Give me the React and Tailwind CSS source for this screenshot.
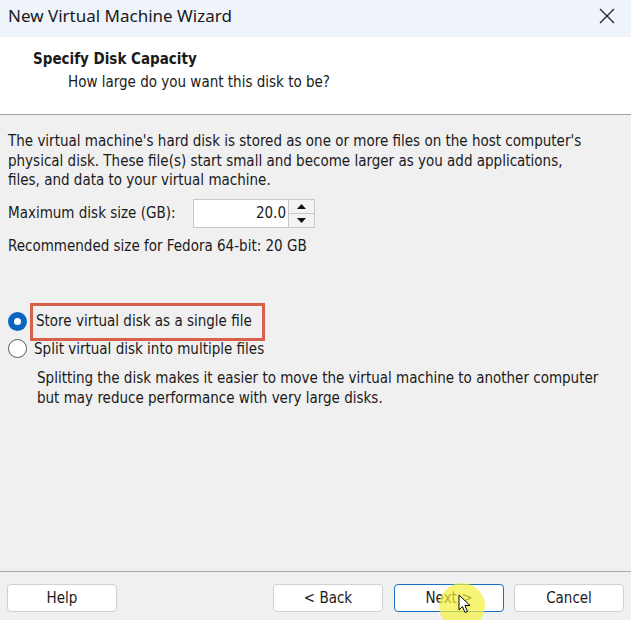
import React from 'react';

const font = "font-['DejaVu_Sans_Condensed','DejaVu_Sans',sans-serif]";

const Radio = ({ checked }) =>
  checked ? (
    <span className="w-[19px] h-[19px] rounded-full bg-[#0a64c0] flex items-center justify-center shrink-0">
      <span className="w-[7px] h-[7px] rounded-full bg-white" />
    </span>
  ) : (
    <span className="w-[19px] h-[19px] rounded-full border border-[#5a5a5a] bg-white shrink-0" />
  );

const Button = ({ children, focused, className = '' }) => (
  <div
    className={`h-[28px] w-[110px] rounded-[4px] bg-white flex items-center justify-center text-[15px] text-[#1a1a1a] ${
      focused ? 'border border-[#1a6fc4]' : 'border border-[#d0d0d0]'
    } ${className}`}
  >
    {children}
  </div>
);

const App = () => {
  return (
    <div className={`w-[631px] h-[620px] bg-[#f0f0f0] flex flex-col overflow-hidden relative ${font} text-[15px] text-[#1a1a1a]`}>
      {/* Title bar */}
      <div className="h-[37px] bg-[#eff3fa] flex items-center justify-between pl-[8px] pr-[16px] pb-[5px] shrink-0">
        <span className="text-[17px] text-[#1a1a1a] font-['Noto_Sans',sans-serif]">New Virtual Machine Wizard</span>
        <svg width="16" height="16" viewBox="0 0 16 16" className="text-[#222]">
          <path d="M1 1 L15 15 M15 1 L1 15" stroke="currentColor" strokeWidth="1.3" fill="none" />
        </svg>
      </div>

      {/* Header */}
      <div className="h-[78px] bg-white border-b border-[#a0a0a0] pl-[33px] pt-[12px] shrink-0">
        <div className="font-bold leading-[20px]">Specify Disk Capacity</div>
        <div className="pl-[35px] leading-[22px] mt-[2px]">How large do you want this disk to be?</div>
      </div>

      {/* Body */}
      <div className="flex-1 px-[8px] pt-[17px]">
        <p className="leading-[19.5px]">
          The virtual machine's hard disk is stored as one or more files on the host computer's
          <br />
          physical disk. These file(s) start small and become larger as you add applications,
          <br />
          files, and data to your virtual machine.
        </p>

        <div className="flex items-center mt-[8px]">
          <span className="w-[177px] shrink-0">Maximum disk size (GB):</span>
          <div className="ml-[8px] flex h-[29px]">
            <div className="w-[96px] bg-white border border-[#c8c8c8] flex items-center justify-end pr-[2px]">20.0</div>
            <div className="w-[26px] flex flex-col border border-l-0 border-[#c8c8c8]">
              <div className="flex-1 bg-[#f3f3f3] border-b border-[#c8c8c8] flex items-center justify-center">
                <svg width="9" height="5" viewBox="0 0 9 5"><path d="M0 5 L4.5 0 L9 5 Z" fill="#111" /></svg>
              </div>
              <div className="flex-1 bg-[#f3f3f3] flex items-center justify-center">
                <svg width="9" height="5" viewBox="0 0 9 5"><path d="M0 0 L4.5 5 L9 0 Z" fill="#111" /></svg>
              </div>
            </div>
          </div>
        </div>

        <div className="mt-[8px] leading-[20px]">Recommended size for Fedora 64-bit: 20 GB</div>

        <div className="mt-[47px] flex items-center">
          <Radio checked />
          <div className="ml-[3px] pl-[3px] pr-[10px] h-[38px] flex items-center border-[3px] border-[#d9614c]">
            Store virtual disk as a single file
          </div>
        </div>
        <div className="flex items-center -mt-[3px]">
          <Radio />
          <span className="ml-[7px]">Split virtual disk into multiple files</span>
        </div>
        <p className="pl-[29px] mt-[9px] leading-[19.5px]">
          Splitting the disk makes it easier to move the virtual machine to another computer
          <br />
          but may reduce performance with very large disks.
        </p>
      </div>

      {/* Footer */}
      <div className="h-[49px] border-t border-[#a8a8a8] flex items-start pt-[12px] px-[7px] shrink-0">
        <Button>Help</Button>
        <div className="ml-auto flex">
          <Button>&lt; Back</Button>
          <Button focused className="ml-[11px]">Next &gt;</Button>
          <Button className="ml-[10px]">Cancel</Button>
        </div>
      </div>

      {/* Cursor highlight */}
      <div className="absolute left-[439px] top-[583px] w-[46px] h-[46px] rounded-full bg-[#f5f03a]/70" />
      <svg className="absolute left-[458px] top-[594px]" width="14" height="20" viewBox="0 0 14 20">
        <path d="M1 1 L1 16 L4.5 12.5 L7 18.5 L9.5 17.5 L7 11.5 L12 11.5 Z" fill="white" stroke="black" strokeWidth="1" />
      </svg>
    </div>
  );
};

export default App;
